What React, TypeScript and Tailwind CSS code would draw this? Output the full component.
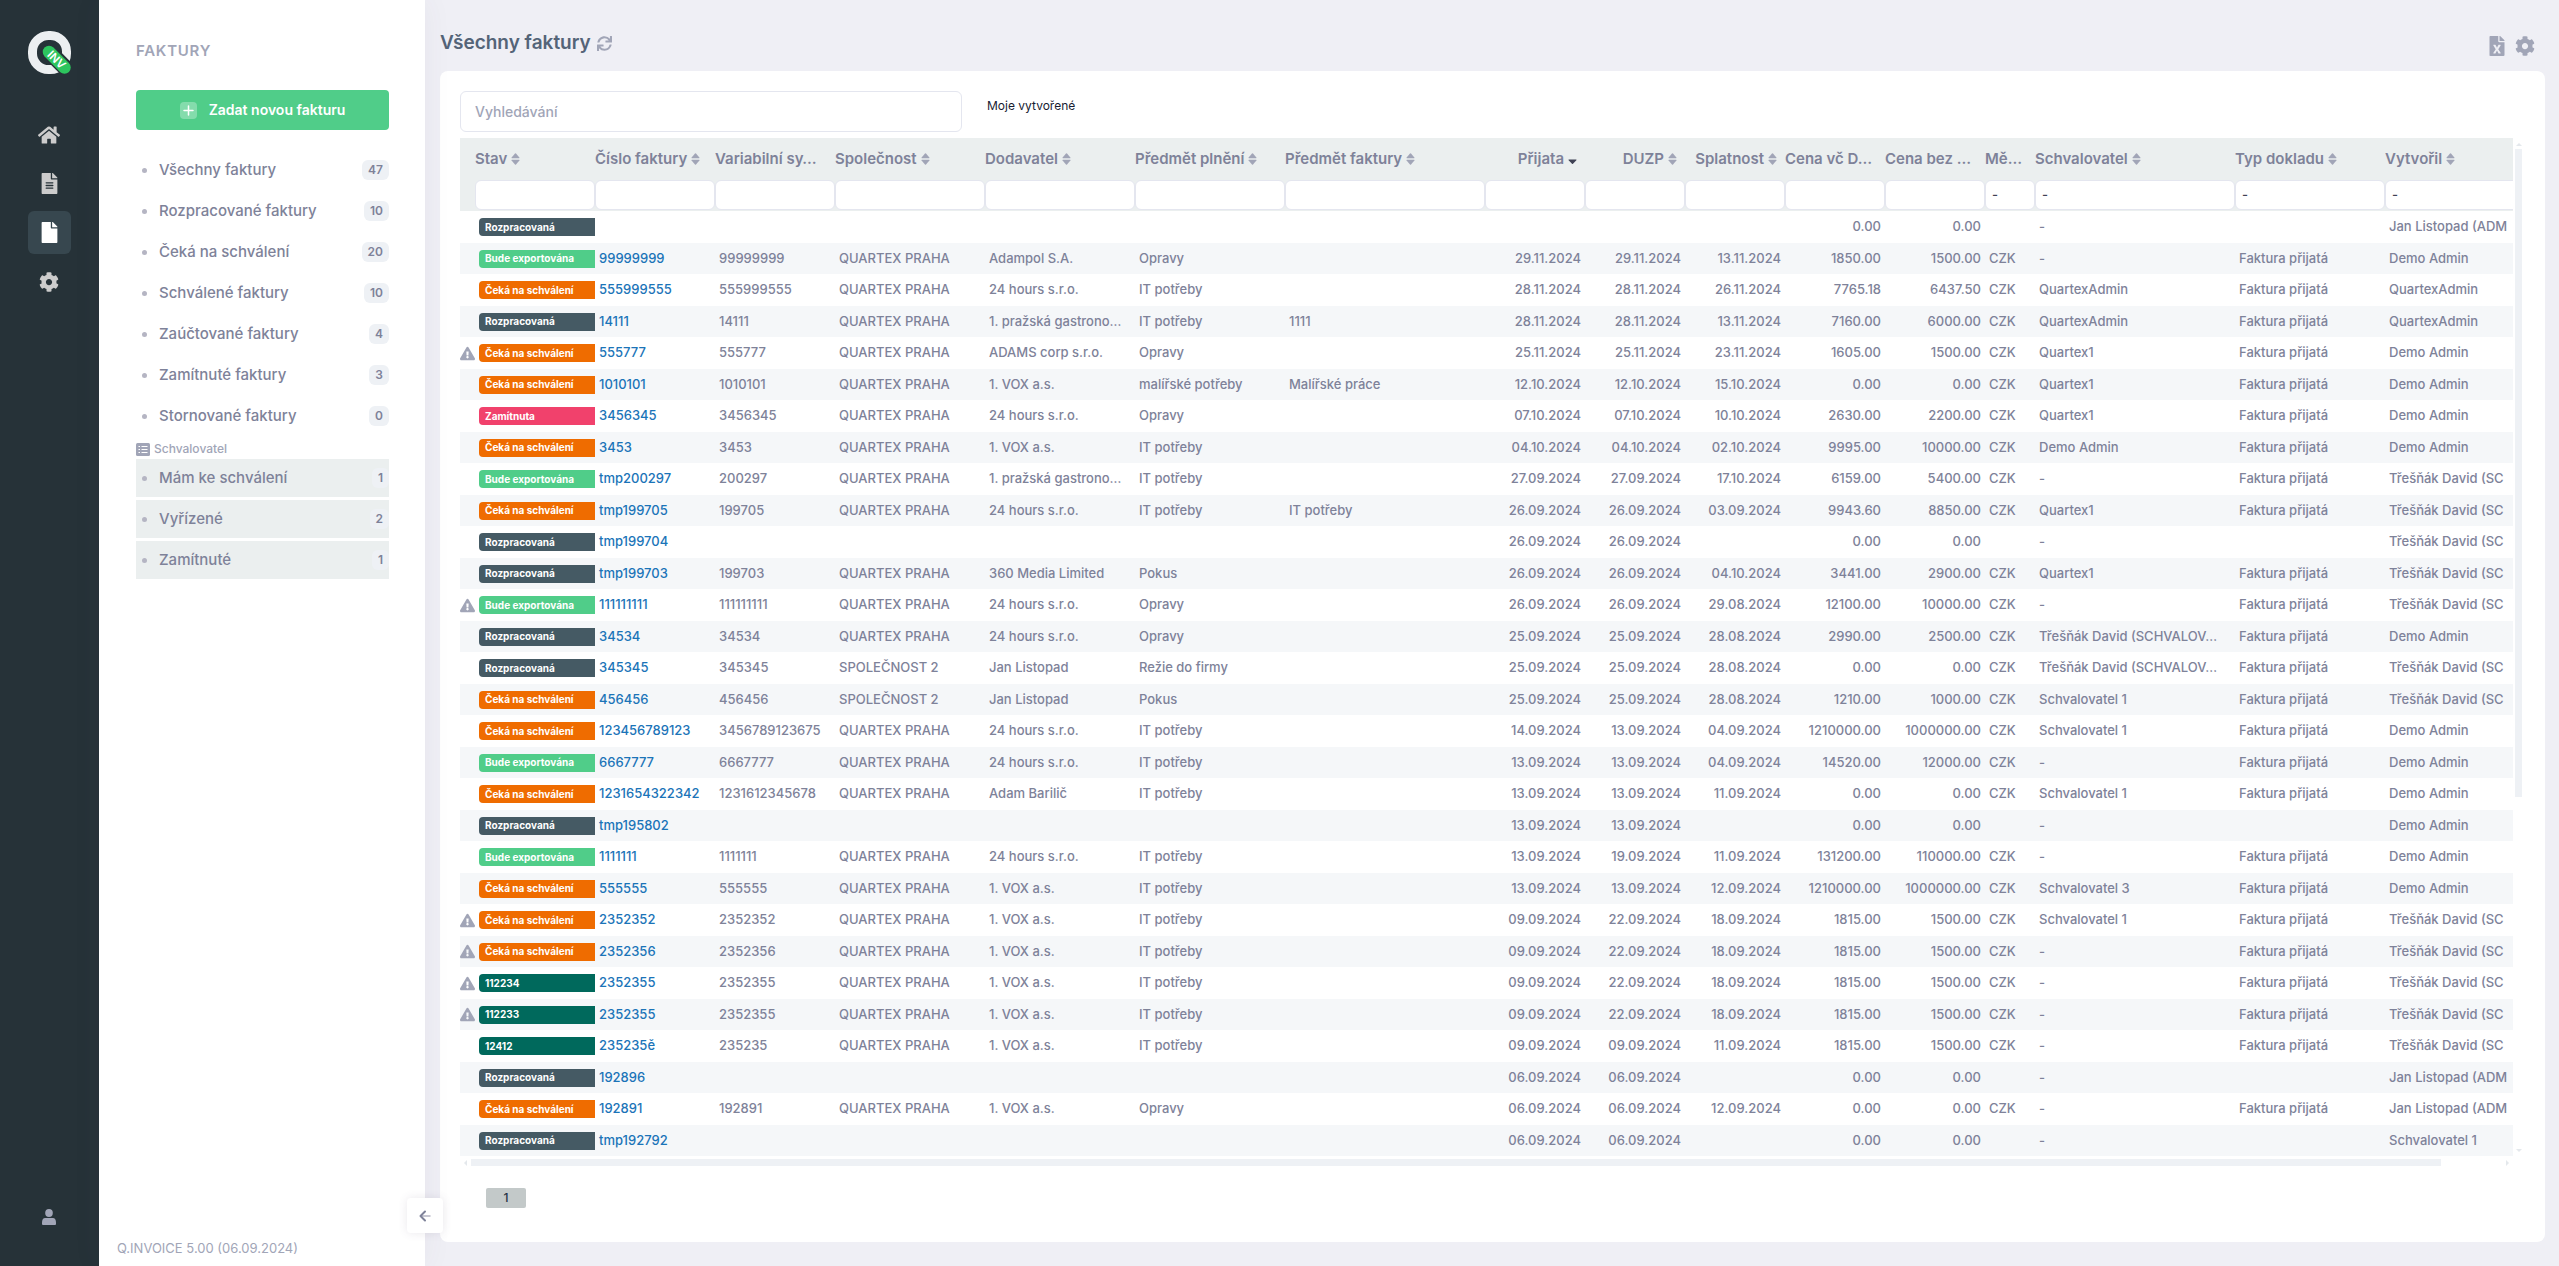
import { useState } from 'react'
import {
  FaCog,
  FaExclamationTriangle,
  FaFile,
  FaFileAlt,
  FaFileExcel,
  FaHome,
  FaSync,
} from 'react-icons/fa'
import { clsx } from 'clsx'

type Status = 'draft' | 'export' | 'waiting' | 'rejected' | 'done'

interface Invoice {
  status: Status
  label?: string
  warn?: boolean
  number?: string
  variable?: string
  company?: string
  supplier?: string
  subject?: string
  invoiceSubject?: string
  received?: string
  duzp?: string
  due?: string
  total: string
  net: string
  approver: string
  author: string
}

const STATUS: Record<Status, { label: string; className: string }> = {
  draft: { label: 'Rozpracovaná', className: 'bg-[#455a64]' },
  export: { label: 'Bude exportována', className: 'bg-[#50cd89]' },
  waiting: { label: 'Čeká na schválení', className: 'bg-[#ef6c00]' },
  rejected: { label: 'Zamítnuta', className: 'bg-[#f1416c]' },
  done: { label: '', className: 'bg-[#00695c]' },
}

const QP = 'QUARTEX PRAHA'
const SP = 'SPOLEČNOST 2'
const H24 = '24 hours s.r.o.'
const VOX = '1. VOX a.s.'
const IT = 'IT potřeby'
const DA = 'Demo Admin'
const TD = 'Třešňák David (SC'
const TDS = 'Třešňák David (SCHVALOV…'
const JL = 'Jan Listopad (ADM'

const INVOICES: Invoice[] = [
  { status: 'draft', total: '0.00', net: '0.00', approver: '-', author: JL },
  { status: 'export', number: '99999999', variable: '99999999', company: QP, supplier: 'Adampol S.A.', subject: 'Opravy', received: '29.11.2024', duzp: '29.11.2024', due: '13.11.2024', total: '1850.00', net: '1500.00', approver: '-', author: DA },
  { status: 'waiting', number: '555999555', variable: '555999555', company: QP, supplier: H24, subject: IT, received: '28.11.2024', duzp: '28.11.2024', due: '26.11.2024', total: '7765.18', net: '6437.50', approver: 'QuartexAdmin', author: 'QuartexAdmin' },
  { status: 'draft', number: '14111', variable: '14111', company: QP, supplier: '1. pražská gastrono…', subject: IT, invoiceSubject: '1111', received: '28.11.2024', duzp: '28.11.2024', due: '13.11.2024', total: '7160.00', net: '6000.00', approver: 'QuartexAdmin', author: 'QuartexAdmin' },
  { status: 'waiting', warn: true, number: '555777', variable: '555777', company: QP, supplier: 'ADAMS corp s.r.o.', subject: 'Opravy', received: '25.11.2024', duzp: '25.11.2024', due: '23.11.2024', total: '1605.00', net: '1500.00', approver: 'Quartex1', author: DA },
  { status: 'waiting', number: '1010101', variable: '1010101', company: QP, supplier: VOX, subject: 'malířské potřeby', invoiceSubject: 'Malířské práce', received: '12.10.2024', duzp: '12.10.2024', due: '15.10.2024', total: '0.00', net: '0.00', approver: 'Quartex1', author: DA },
  { status: 'rejected', number: '3456345', variable: '3456345', company: QP, supplier: H24, subject: 'Opravy', received: '07.10.2024', duzp: '07.10.2024', due: '10.10.2024', total: '2630.00', net: '2200.00', approver: 'Quartex1', author: DA },
  { status: 'waiting', number: '3453', variable: '3453', company: QP, supplier: VOX, subject: IT, received: '04.10.2024', duzp: '04.10.2024', due: '02.10.2024', total: '9995.00', net: '10000.00', approver: DA, author: DA },
  { status: 'export', number: 'tmp200297', variable: '200297', company: QP, supplier: '1. pražská gastrono…', subject: IT, received: '27.09.2024', duzp: '27.09.2024', due: '17.10.2024', total: '6159.00', net: '5400.00', approver: '-', author: TD },
  { status: 'waiting', number: 'tmp199705', variable: '199705', company: QP, supplier: H24, subject: IT, invoiceSubject: 'IT potřeby', received: '26.09.2024', duzp: '26.09.2024', due: '03.09.2024', total: '9943.60', net: '8850.00', approver: 'Quartex1', author: TD },
  { status: 'draft', number: 'tmp199704', received: '26.09.2024', duzp: '26.09.2024', total: '0.00', net: '0.00', approver: '-', author: TD },
  { status: 'draft', number: 'tmp199703', variable: '199703', company: QP, supplier: '360 Media Limited', subject: 'Pokus', received: '26.09.2024', duzp: '26.09.2024', due: '04.10.2024', total: '3441.00', net: '2900.00', approver: 'Quartex1', author: TD },
  { status: 'export', warn: true, number: '111111111', variable: '111111111', company: QP, supplier: H24, subject: 'Opravy', received: '26.09.2024', duzp: '26.09.2024', due: '29.08.2024', total: '12100.00', net: '10000.00', approver: '-', author: TD },
  { status: 'draft', number: '34534', variable: '34534', company: QP, supplier: H24, subject: 'Opravy', received: '25.09.2024', duzp: '25.09.2024', due: '28.08.2024', total: '2990.00', net: '2500.00', approver: TDS, author: DA },
  { status: 'draft', number: '345345', variable: '345345', company: SP, supplier: 'Jan Listopad', subject: 'Režie do firmy', received: '25.09.2024', duzp: '25.09.2024', due: '28.08.2024', total: '0.00', net: '0.00', approver: TDS, author: TD },
  { status: 'waiting', number: '456456', variable: '456456', company: SP, supplier: 'Jan Listopad', subject: 'Pokus', received: '25.09.2024', duzp: '25.09.2024', due: '28.08.2024', total: '1210.00', net: '1000.00', approver: 'Schvalovatel 1', author: TD },
  { status: 'waiting', number: '123456789123', variable: '3456789123675', company: QP, supplier: H24, subject: IT, received: '14.09.2024', duzp: '13.09.2024', due: '04.09.2024', total: '1210000.00', net: '1000000.00', approver: 'Schvalovatel 1', author: DA },
  { status: 'export', number: '6667777', variable: '6667777', company: QP, supplier: H24, subject: IT, received: '13.09.2024', duzp: '13.09.2024', due: '04.09.2024', total: '14520.00', net: '12000.00', approver: '-', author: DA },
  { status: 'waiting', number: '1231654322342', variable: '1231612345678', company: QP, supplier: 'Adam Barilič', subject: IT, received: '13.09.2024', duzp: '13.09.2024', due: '11.09.2024', total: '0.00', net: '0.00', approver: 'Schvalovatel 1', author: DA },
  { status: 'draft', number: 'tmp195802', received: '13.09.2024', duzp: '13.09.2024', total: '0.00', net: '0.00', approver: '-', author: DA },
  { status: 'export', number: '1111111', variable: '1111111', company: QP, supplier: H24, subject: IT, received: '13.09.2024', duzp: '19.09.2024', due: '11.09.2024', total: '131200.00', net: '110000.00', approver: '-', author: DA },
  { status: 'waiting', number: '555555', variable: '555555', company: QP, supplier: VOX, subject: IT, received: '13.09.2024', duzp: '13.09.2024', due: '12.09.2024', total: '1210000.00', net: '1000000.00', approver: 'Schvalovatel 3', author: DA },
  { status: 'waiting', warn: true, number: '2352352', variable: '2352352', company: QP, supplier: VOX, subject: IT, received: '09.09.2024', duzp: '22.09.2024', due: '18.09.2024', total: '1815.00', net: '1500.00', approver: 'Schvalovatel 1', author: TD },
  { status: 'waiting', warn: true, number: '2352356', variable: '2352356', company: QP, supplier: VOX, subject: IT, received: '09.09.2024', duzp: '22.09.2024', due: '18.09.2024', total: '1815.00', net: '1500.00', approver: '-', author: TD },
  { status: 'done', label: '112234', warn: true, number: '2352355', variable: '2352355', company: QP, supplier: VOX, subject: IT, received: '09.09.2024', duzp: '22.09.2024', due: '18.09.2024', total: '1815.00', net: '1500.00', approver: '-', author: TD },
  { status: 'done', label: '112233', warn: true, number: '2352355', variable: '2352355', company: QP, supplier: VOX, subject: IT, received: '09.09.2024', duzp: '22.09.2024', due: '18.09.2024', total: '1815.00', net: '1500.00', approver: '-', author: TD },
  { status: 'done', label: '12412', number: '235235ě', variable: '235235', company: QP, supplier: VOX, subject: IT, received: '09.09.2024', duzp: '09.09.2024', due: '11.09.2024', total: '1815.00', net: '1500.00', approver: '-', author: TD },
  { status: 'draft', number: '192896', received: '06.09.2024', duzp: '06.09.2024', total: '0.00', net: '0.00', approver: '-', author: JL },
  { status: 'waiting', number: '192891', variable: '192891', company: QP, supplier: VOX, subject: 'Opravy', received: '06.09.2024', duzp: '06.09.2024', due: '12.09.2024', total: '0.00', net: '0.00', approver: '-', author: JL },
  { status: 'draft', number: 'tmp192792', received: '06.09.2024', duzp: '06.09.2024', total: '0.00', net: '0.00', approver: '-', author: 'Schvalovatel 1' },
]

interface Column {
  label: string
  width: string
  right?: boolean
  select?: boolean
  sort?: 'both' | 'desc' | 'none'
}

const COLUMNS: Column[] = [
  { label: 'Stav', width: 'w-[120px]' },
  { label: 'Číslo faktury', width: 'w-[120px]' },
  { label: 'Variabilní sy…', width: 'w-[120px]', sort: 'none' },
  { label: 'Společnost', width: 'w-[150px]' },
  { label: 'Dodavatel', width: 'w-[150px]' },
  { label: 'Předmět plnění', width: 'w-[150px]' },
  { label: 'Předmět faktury', width: 'w-[200px]' },
  { label: 'Přijata', width: 'w-[100px]', right: true, sort: 'desc' },
  { label: 'DUZP', width: 'w-[100px]', right: true },
  { label: 'Splatnost', width: 'w-[100px]', right: true },
  { label: 'Cena vč D…', width: 'w-[100px]', sort: 'none' },
  { label: 'Cena bez …', width: 'w-[100px]', sort: 'none' },
  { label: 'Mě…', width: 'w-[50px]', select: true, sort: 'none' },
  { label: 'Schvalovatel', width: 'w-[200px]', select: true },
  { label: 'Typ dokladu', width: 'w-[150px]', select: true },
  { label: 'Vytvořil', width: 'w-[200px]', select: true },
]

const FOLDERS = [
  { label: 'Všechny faktury', count: 47 },
  { label: 'Rozpracované faktury', count: 10 },
  { label: 'Čeká na schválení', count: 20 },
  { label: 'Schválené faktury', count: 10 },
  { label: 'Zaúčtované faktury', count: 4 },
  { label: 'Zamítnuté faktury', count: 3 },
  { label: 'Stornované faktury', count: 0 },
]

const APPROVALS = [
  { label: 'Mám ke schválení', count: 1 },
  { label: 'Vyřízené', count: 2 },
  { label: 'Zamítnuté', count: 1 },
]

function Logo() {
  return (
    <svg viewBox="0 0 43 43" className="h-[43px] w-[43px]" aria-label="Q.Invoice">
      <rect x="4.5" y="4.5" width="34" height="34" rx="16" fill="none" stroke="#eceff1" strokeWidth="9" />
      <path d="M21 20.5 43 42.5" stroke="#263238" strokeWidth="16" strokeLinecap="round" />
      <path d="M21 21 36.5 36.5" stroke="#2dc55e" strokeWidth="12.5" strokeLinecap="round" />
      <text
        x="28.5"
        y="32.8"
        transform="rotate(45 28.5 28.8)"
        textAnchor="middle"
        fontSize="11.5"
        fontWeight="600"
        fill="#fff"
      >
        INV
      </text>
    </svg>
  )
}

function RailLink({ label, active, children }: { label: string; active?: boolean; children: React.ReactNode }) {
  return (
    <a
      href="#"
      aria-label={label}
      className={clsx(
        'flex h-[43px] w-[43px] items-center justify-center rounded-md',
        active ? 'bg-[#37474f] text-white' : 'text-[#cccccc]'
      )}
    >
      {children}
    </a>
  )
}

function Rail() {
  return (
    <nav className="flex w-[99px] shrink-0 flex-col items-center bg-[#263238] pt-[31px] pr-px pb-7">
      <Logo />
      <div className="mt-[39px] flex flex-col gap-1.5">
        <RailLink label="Domů"><FaHome className="h-[22px] w-[22px]" /></RailLink>
        <RailLink label="Dokumenty"><FaFileAlt className="h-[21px] w-[21px]" /></RailLink>
        <RailLink label="Faktury" active><FaFile className="h-[21px] w-[21px]" /></RailLink>
        <RailLink label="Nastavení"><FaCog className="h-5 w-5" /></RailLink>
      </div>
      <a href="#" aria-label="Profil" className="mt-auto flex h-[43px] w-[43px] items-center justify-center text-[#a1a5b7]">
        <svg viewBox="0 0 14 16" className="h-4 w-3.5" fill="currentColor">
          <ellipse cx="7" cy="4" rx="3.8" ry="4" />
          <path d="M3.2 9h7.6C13 9 14 11 14 13.500V15q0 1-1 1H1q-1 0-1-1v-1.500C0 11 1 9 3.200 9Z" />
        </svg>
      </a>
    </nav>
  )
}

function MenuItem({ label, count, shaded }: { label: string; count: number; shaded?: boolean }) {
  return (
    <a
      href="#"
      className={clsx(
        'flex h-[38px] items-center text-[15px] font-medium text-[#7e8299]',
        shaded && 'bg-[#ebefef]'
      )}
    >
      <span className="mr-3 ml-1.5 h-[5px] w-[5px] rounded-full bg-[#b5b5c3]" />
      {label}
      <span className="ml-auto flex h-5 items-center rounded-md bg-[#eef1f5] px-1.5 text-xs font-semibold">
        {count}
      </span>
    </a>
  )
}

function Aside() {
  return (
    <aside className="relative z-10 flex w-[326px] shrink-0 flex-col bg-white pt-10 pb-2 shadow-[0_0_28px_rgba(82,63,105,0.06)]">
      <div className="pr-9 pl-[37px]">
        <h2 className="text-[15px] leading-[22px] font-semibold tracking-wider text-[#a1a5b7]">FAKTURY</h2>
        <button className="mt-7 flex h-10 w-full items-center justify-center gap-3 rounded bg-[#50cd89] text-sm font-semibold text-white">
          <svg viewBox="0 0 17 17" className="h-[17px] w-[17px]">
            <rect width="17" height="17" rx="4" fill="#fff" opacity="0.3" />
            <path d="M8.500 4v9M4 8.500h9" stroke="#fff" strokeWidth="1.500" strokeLinecap="round" />
          </svg>
          Zadat novou fakturu
        </button>
        <div className="mt-[21px] flex flex-col gap-[3px]">
          {FOLDERS.map((f) => (
            <MenuItem key={f.label} {...f} />
          ))}
        </div>
        <div className="mt-1 flex h-5 items-center gap-1 text-xs font-medium text-[#a1a5b7]">
          <svg viewBox="0 0 14 13" className="h-[13px] w-3.5">
            <rect width="14" height="13" rx="1.500" fill="currentColor" />
            <path d="M2.500 3.500h1.500M5.500 3.500h6M2.500 6.500h1.500M5.500 6.500h6M2.500 9.500h1.500M5.500 9.500h6" stroke="#fff" strokeWidth="1.200" />
          </svg>
          Schvalovatel
        </div>
        <div className="flex flex-col gap-[3px]">
          {APPROVALS.map((f) => (
            <MenuItem key={f.label} {...f} shaded />
          ))}
        </div>
      </div>
      <p className="mt-auto pl-[18px] text-[13px] leading-5 text-[#a1a5b7]">Q.INVOICE 5.00 (06.09.2024)</p>
      {/* collapse toggle, hangs over the edge of the panel */}
      <button
        aria-label="Skrýt panel"
        className="absolute -right-[18px] bottom-[33px] flex h-[35px] w-9 items-center justify-center rounded bg-white shadow-[0_0_10px_rgba(82,63,105,0.12)]"
      >
        <svg viewBox="0 0 12 12" className="h-3 w-3" fill="none" strokeLinecap="round" strokeLinejoin="round">
          <path d="M2 6h9" stroke="#b5b5c3" strokeWidth="1.500" />
          <path d="M6 1.500 1.500 6 6 10.500" stroke="#7e8299" strokeWidth="2" />
        </svg>
      </button>
    </aside>
  )
}

function SortIcon({ sort = 'both' }: { sort?: Column['sort'] }) {
  if (sort === 'none') return null
  if (sort === 'desc') {
    return (
      <svg viewBox="0 0 9 12" className="h-3 w-[9px]" fill="#3f4254">
        <path d="M1 6.500h7q1 0 .4.800L5 10.700q-.5.500-1 0L.6 7.300Q0 6.500 1 6.500Z" />
      </svg>
    )
  }
  return (
    <svg viewBox="0 0 9 12" className="h-3 w-[9px]" fill="#a1a5b7">
      <path d="M1 5.200h7q1 0 .4-.8L5 .6q-.5-.5-1 0L.6 4.400Q0 5.200 1 5.200Z" />
      <path d="M1 6.800h7q1 0 .4.800L5 11.400q-.5.500-1 0L.6 7.600Q0 6.800 1 6.800Z" />
    </svg>
  )
}

function Td({ children, right }: { children?: React.ReactNode; right?: boolean }) {
  return (
    <td className={clsx('overflow-hidden px-1 py-0 whitespace-nowrap', right && 'text-right')}>{children}</td>
  )
}

function InvoiceTable() {
  return (
    <table className="w-[2125px] table-fixed border-collapse text-[13px] font-medium text-[#7e8299]">
      <colgroup>
        <col className="w-[15px]" />
        {COLUMNS.map((c) => (
          <col key={c.label} className={c.width} />
        ))}
      </colgroup>
      <thead className="bg-[#ebefef]">
        <tr className="h-[42px]">
          <th className="p-0" />
          {COLUMNS.map((c) => (
            <th key={c.label} className="overflow-hidden p-0 text-[15px] font-semibold whitespace-nowrap">
              <div className={clsx('flex items-center gap-1', c.right && 'justify-end pr-2')}>
                {c.label}
                <SortIcon sort={c.sort} />
              </div>
            </th>
          ))}
        </tr>
        <tr className="h-[31px]">
          <td className="p-0" />
          {COLUMNS.map((c) => (
            <td key={c.label} className="p-0 align-top">
              {c.select ? (
                <select
                  aria-label={c.label}
                  className="block h-[30px] w-full appearance-none rounded-md border border-[#e4e6ef] bg-white px-1.5 text-[#3f4254]"
                >
                  <option>-</option>
                </select>
              ) : (
                <input
                  aria-label={c.label}
                  className="block h-[30px] w-full rounded-md border border-[#e4e6ef] bg-white px-1.5"
                />
              )}
            </td>
          ))}
        </tr>
      </thead>
      <tbody>
        {INVOICES.map((r, i) => (
          <tr key={i} className={i % 2 ? 'h-[31px] bg-[#f5f7f9]' : 'h-8'}>
            <td className="p-0">{r.warn && <FaExclamationTriangle className="h-[15px] w-[15px] text-[#a1a5b7]" />}</td>
            <td className="p-0 pl-1">
              <span
                className={clsx(
                  'flex h-[18px] items-center rounded-l px-1.5 text-[10px] font-bold text-white',
                  STATUS[r.status].className
                )}
              >
                {r.label ?? STATUS[r.status].label}
              </span>
            </td>
            <Td>{r.number && <a href="#" className="text-[#1b74b8]">{r.number}</a>}</Td>
            <Td>{r.variable}</Td>
            <Td>{r.company}</Td>
            <Td>{r.supplier}</Td>
            <Td>{r.subject}</Td>
            <Td>{r.invoiceSubject}</Td>
            <Td right>{r.received}</Td>
            <Td right>{r.duzp}</Td>
            <Td right>{r.due}</Td>
            <Td right>{r.total}</Td>
            <Td right>{r.net}</Td>
            <Td>{r.company && 'CZK'}</Td>
            <Td>{r.approver}</Td>
            <Td>{r.company && 'Faktura přijatá'}</Td>
            <Td>{r.author}</Td>
          </tr>
        ))}
      </tbody>
    </table>
  )
}

export default function App() {
  const [query, setQuery] = useState('')

  return (
    <div className="flex min-h-screen bg-[#efeff5] font-[Inter,'Noto_Sans',sans-serif]">
      <Rail />
      <Aside />
      <main className="flex min-w-0 flex-1 flex-col pr-3.5 pb-6 pl-[15px]">
        <header className="flex h-[71px] shrink-0 items-center justify-between pt-5 pr-2.5">
          <div className="flex items-center gap-1.5 pb-1">
            <h1 className="text-[19px] font-semibold text-[#546478]">Všechny faktury</h1>
            <button aria-label="Obnovit" className="text-[#a1a5b7]"><FaSync className="h-[15px] w-[15px]" /></button>
          </div>
          <div className="flex items-center gap-2 text-[#a1a5b7]">
            <button aria-label="Export do Excelu"><FaFileExcel className="h-5 w-5" /></button>
            <button aria-label="Nastavení tabulky"><FaCog className="h-5 w-5" /></button>
          </div>
        </header>

        <section className="flex flex-1 flex-col rounded-lg bg-white px-5 pt-5">
          <div className="mb-1.5 flex items-start gap-[25px]">
            <input
              value={query}
              onChange={(e) => setQuery(e.target.value)}
              aria-label="Vyhledávání"
              placeholder="Vyhledávání"
              className="h-[41px] w-[502px] rounded-md border border-[#e4e6ef] px-3.5 text-sm font-medium placeholder:text-[#a1a5b7]"
            />
            <a href="#" className="pt-1.5 text-xs leading-[18px] text-[#181c32]">Moje vytvořené</a>
          </div>

          <div className="flex">
            <div className="min-w-0 flex-1">
              <div className="overflow-hidden">
                <InvoiceTable />
              </div>
              {/* horizontal scrollbar */}
              <div className="mt-[3px] flex h-[7px] items-center gap-1 px-1">
                <span className="border-y-3 border-r-3 border-y-transparent border-r-[#e4e8ec]" />
                <div className="flex-1">
                  <div className="h-[7px] w-[97%] bg-[#eef1f5]" />
                </div>
                <span className="border-y-3 border-l-3 border-y-transparent border-l-[#e4e8ec]" />
              </div>
            </div>
            {/* vertical scrollbar */}
            <div className="mr-[3px] ml-0.5 flex w-[7px] flex-col items-center gap-[3px] pt-[5px] pb-3.5">
              <span className="border-x-3 border-b-3 border-x-transparent border-b-[#e4e8ec]" />
              <div className="w-full flex-1">
                <div className="h-[65%] w-full bg-[#eef1f5]" />
              </div>
              <span className="border-x-3 border-t-3 border-x-transparent border-t-[#e4e8ec]" />
            </div>
          </div>

          <div className="mt-[22px] pb-[34px] pl-[26px]">
            <button className="block h-5 w-10 rounded-xs bg-[#c3c9c9] text-xs font-medium text-[#263245]">1</button>
          </div>
        </section>
      </main>
    </div>
  )
}
